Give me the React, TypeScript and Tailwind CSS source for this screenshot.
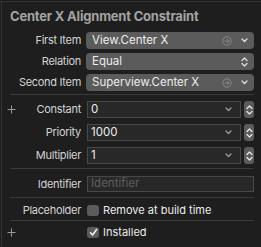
import React from "react";

const font = { fontFamily: "Inter, 'Liberation Sans', sans-serif" };

function ChevDown() {
  return (
    <svg width="7" height="5" viewBox="0 0 7 5">
      <path d="M1 1 L3.5 3.5 L6 1" fill="none" stroke="currentColor" strokeWidth="1.3" strokeLinecap="round" strokeLinejoin="round" />
    </svg>
  );
}

function UpDown() {
  return (
    <svg width="7" height="10" viewBox="0 0 7 10">
      <path d="M1 3.5 L3.5 1 L6 3.5" fill="none" stroke="currentColor" strokeWidth="1.3" strokeLinecap="round" strokeLinejoin="round" />
      <path d="M1 6.5 L3.5 9 L6 6.5" fill="none" stroke="currentColor" strokeWidth="1.3" strokeLinecap="round" strokeLinejoin="round" />
    </svg>
  );
}

function CircleArrow() {
  return (
    <svg width="10" height="10" viewBox="0 0 10 10">
      <circle cx="5" cy="5" r="4.2" fill="none" stroke="currentColor" strokeWidth="0.9" />
      <path d="M3 5 H7 M5.3 3.3 L7 5 L5.3 6.7" fill="none" stroke="currentColor" strokeWidth="0.9" strokeLinecap="round" strokeLinejoin="round" />
    </svg>
  );
}

function Label({ children }: { children: React.ReactNode }) {
  return <div className="w-[82px] shrink-0 text-right text-[11px] tracking-[-0.3px] leading-none text-[#d4d4d4] pr-[1px]">{children}</div>;
}

function Popup({ text, kind }: { text: string; kind: "item" | "rel" }) {
  return (
    <div className="ml-[4px] flex h-[17px] w-[168px] items-center rounded-[4px] bg-[#5b5b5b] pl-[6px] pr-[6px] text-[11.5px] leading-none text-[#ececec]">
      <span className="flex-1">{text}</span>
      {kind === "item" ? (
        <>
          <span className="text-[#8c8c8c] mr-[9px] flex"><CircleArrow /></span>
          <span className="text-[#e0e0e0] flex"><ChevDown /></span>
        </>
      ) : (
        <span className="text-[#e0e0e0] flex"><UpDown /></span>
      )}
    </div>
  );
}

function NumField({ value }: { value: string }) {
  return (
    <div className="ml-[5px] flex items-center">
      <div className="flex h-[17px] w-[154px] items-center border border-[#484848] bg-[#282828] pl-[3px] pr-[8px] text-[11.5px] leading-none text-[#ececec]">
        <span className="flex-1">{value}</span>
        <span className="text-[#9a9a9a] flex"><ChevDown /></span>
      </div>
      <div className="ml-[3px] flex h-[17px] w-[10px] items-center justify-center rounded-[3px] bg-[#5b5b5b] text-[#e8e8e8]">
        <UpDown />
      </div>
    </div>
  );
}

function Sep({ className }: { className: string }) {
  return <div className={"ml-[10px] h-px w-[244px] bg-[#3a3a3a] " + className} />;
}

function Plus() {
  return (
    <svg width="9" height="9" viewBox="0 0 9 9" className="text-[#9a9a9a]">
      <path d="M4.5 0.5 V8.5 M0.5 4.5 H8.5" stroke="currentColor" strokeWidth="1" />
    </svg>
  );
}

export default function App() {
  return (
    <div className="h-[247px] w-[261px] bg-[#1e1e1e] overflow-hidden" style={font}>
      <div className="h-[1px] bg-[#1a1a1a]" />
      <div className="h-px bg-[#343434]" />
      <div className="flex h-[245px] border-l border-[#343434] ml-[1px]">
        <div className="flex-1 -ml-[2px] flex flex-col">
          <div className="h-[30px] pl-[10px] pt-[7px] text-[13px] font-bold tracking-[-0.2px] text-[#a3a3a3] leading-[14px]">Center X Alignment Constraint</div>
          <div className="flex flex-col gap-[4px]">
            <div className="flex h-[17px] items-center"><Label>First Item</Label><Popup text="View.Center X" kind="item" /></div>
            <div className="flex h-[17px] items-center"><Label>Relation</Label><Popup text="Equal" kind="rel" /></div>
            <div className="flex h-[17px] items-center"><Label>Second Item</Label><Popup text="Superview.Center X" kind="item" /></div>
          </div>
          <Sep className="mt-[3px]" />
          <div className="mt-[6px] flex flex-col gap-[6px]">
            <div className="relative flex h-[17px] items-center">
              <span className="absolute left-[7px] top-[4px] flex"><Plus /></span>
              <Label>Constant</Label><NumField value="0" />
            </div>
            <div className="flex h-[17px] items-center"><Label>Priority</Label><NumField value="1000" /></div>
            <div className="flex h-[17px] items-center"><Label>Multiplier</Label><NumField value="1" /></div>
          </div>
          <Sep className="mt-[4px]" />
          <div className="mt-[7px] flex h-[16px] items-center">
            <Label>Identifier</Label>
            <div className="ml-[5px] flex h-[16px] w-[167px] items-center border border-[#484848] bg-[#282828] pl-[3px] text-[11.5px] leading-none text-[#5e5e5e]">Identifier</div>
          </div>
          <Sep className="mt-[5px]" />
          <div className="mt-[7px] flex items-center h-[11px]">
            <Label>Placeholder</Label>
            <div className="ml-[5px] h-[11px] w-[12px] rounded-[3px] bg-[#5b5b5b]" />
            <span className="ml-[4px] text-[11px] leading-none text-[#ececec]">Remove at build time</span>
          </div>
          <Sep className="mt-[4px]" />
          <div className="relative mt-[5px] flex items-center h-[12px]">
            <span className="absolute left-[7px] top-[2px] flex"><Plus /></span>
            <div className="w-[82px] shrink-0" />
            <div className="ml-[5px] flex h-[11px] w-[12px] items-center justify-center rounded-[3px] bg-[#5b5b5b]">
              <svg width="9" height="9" viewBox="0 0 9 9">
                <path d="M1.5 4.8 L3.6 7 L7.6 1.5" fill="none" stroke="#f2f2f2" strokeWidth="1.6" strokeLinecap="round" strokeLinejoin="round" />
              </svg>
            </div>
            <span className="ml-[4px] text-[11px] leading-none text-[#ececec]">Installed</span>
          </div>
        </div>
      </div>
    </div>
  );
}
